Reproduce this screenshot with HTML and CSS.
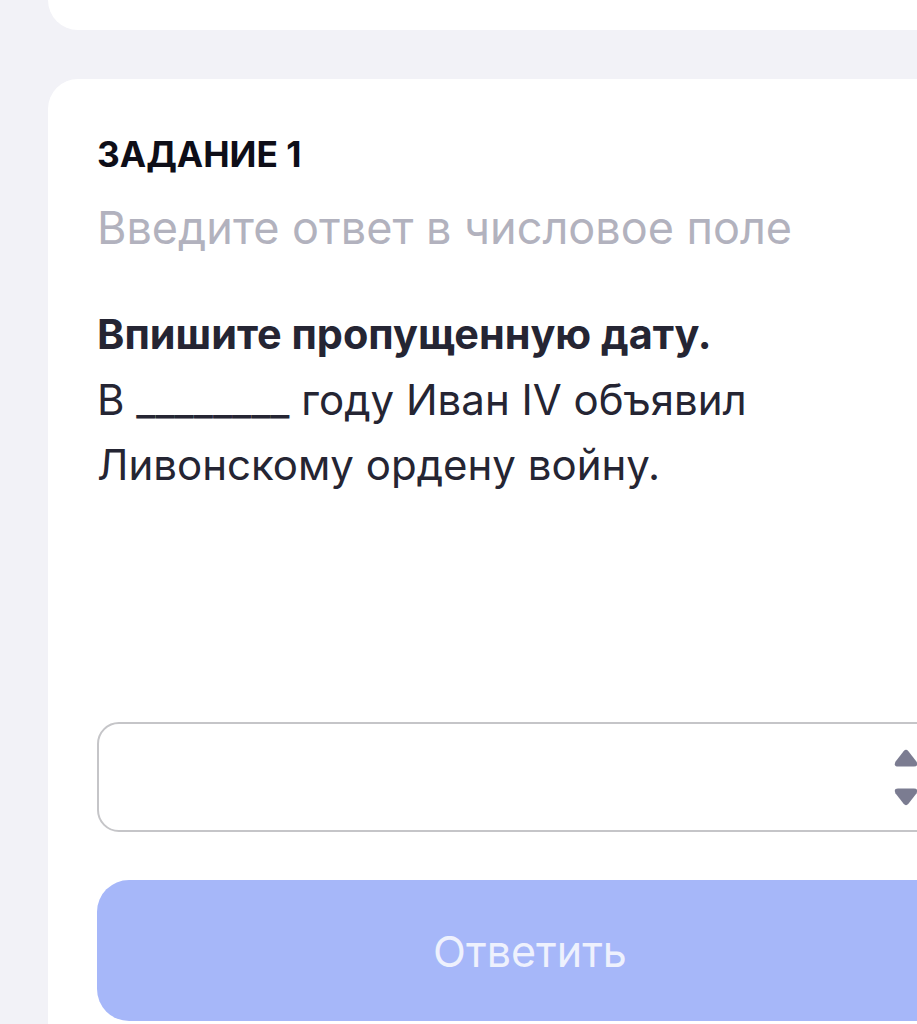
FILE: index.html
```html
<!DOCTYPE html>
<html lang="ru">
<head>
    <meta charset="UTF-8">
    <meta name="viewport" content="width=device-width, initial-scale=1.0">
    <title>Задание 1</title>
    <link rel="stylesheet" href="styles.css">
</head>
<body>
    <div class="page">
        <div class="card card-prev"></div>

        <div class="card task">
            <div class="task-title">ЗАДАНИЕ 1</div>
            <div class="task-hint">Введите ответ в числовое поле</div>

            <div class="question">
                <p class="question-lead">Впишите пропущенную дату.</p>
                <p>В ________ году Иван IV объявил Ливонскому ордену войну.</p>
            </div>

            <div class="answer-field">
                <input type="text" class="answer-input" inputmode="numeric">
                <div class="spinner">
                    <svg width="24" height="19" viewBox="0 0 24 19">
                        <path d="M9.6 2.2 Q12 -0.6 14.4 2.2 L22.6 12.8 Q24.6 17.6 20 17.6 L4 17.6 Q-0.6 17.6 1.4 12.8 Z" fill="#7b7c91"/>
                    </svg>
                    <svg width="24" height="19" viewBox="0 0 24 19">
                        <path d="M9.6 16.8 Q12 19.6 14.4 16.8 L22.6 6.2 Q24.6 1.4 20 1.4 L4 1.4 Q-0.6 1.4 1.4 6.2 Z" fill="#7b7c91"/>
                    </svg>
                </div>
            </div>

            <button class="btn-answer" disabled>Ответить</button>
        </div>
    </div>
</body>
</html>
```

FILE: styles.css
```css
* {
    margin: 0;
    padding: 0;
    box-sizing: border-box;
}

body {
    font-family: 'Inter', 'Roboto', sans-serif;
    background-color: #f2f2f7;
    color: #1f1f2b;
    overflow: hidden;
}

.page {
    width: 1012px;
    padding-left: 48px;
}

.card {
    background: white;
    border-radius: 30px;
}

.card-prev {
    height: 30px;
    border-radius: 0 0 30px 30px;
}

.task {
    margin-top: 49px;
    padding: 54px 49px 40px;
}

.task-title {
    font-size: 35.3px;
    font-weight: 700;
    color: #0e0e18;
    line-height: 44px;
}

.task-hint {
    margin-top: 25px;
    font-size: 45px;
    color: #b2b2be;
    line-height: 52px;
}

.question {
    margin-top: 48px;
    font-size: 42px;
    line-height: 65px;
    color: #252533;
    max-width: 720px;
}

.question-lead {
    font-size: 41.4px;
    font-weight: 700;
}

.answer-field {
    display: flex;
    align-items: center;
    height: 110px;
    margin-top: 225px;
    padding: 0 43px 0 28px;
    border: 2px solid #c5c5c8;
    border-radius: 22px;
}

.answer-input {
    flex: 1;
    min-width: 0;
    border: none;
    outline: none;
    background: transparent;
    font-family: 'Inter', sans-serif;
    font-size: 38px;
}

.spinner {
    display: flex;
    flex-direction: column;
    gap: 19px;
}

.spinner svg {
    display: block;
}

.btn-answer {
    display: block;
    width: 100%;
    height: 141px;
    margin-top: 48px;
    border: none;
    border-radius: 32px;
    background-color: #a6b7f9;
    color: #eef1fd;
    font-family: 'Inter', sans-serif;
    font-size: 43px;
}
```
